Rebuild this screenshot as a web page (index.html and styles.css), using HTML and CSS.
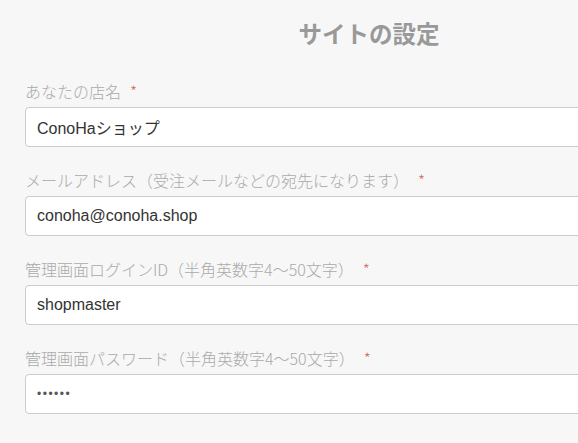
FILE: index.html
```html
<!DOCTYPE html>
<html lang="ja">
    <head>
        <meta charset="utf-8">
        <meta name="viewport" content="width=device-width, initial-scale=1">
        <title>サイトの設定</title>
        <link rel="stylesheet" href="styles.css">
    </head>
    <body>
        <form class="settings">
            <h1 class="settings-title">サイトの設定</h1>
            <div class="field">
                <label for="shop-name">あなたの店名<span class="req">*</span></label>
                <input id="shop-name" type="text" value="ConoHaショップ">
            </div>
            <div class="field">
                <label for="mail">メールアドレス（受注メールなどの宛先になります）<span class="req">*</span></label>
                <input id="mail" type="text" value="conoha@conoha.shop">
            </div>
            <div class="field">
                <label for="login-id">管理画面ログインID（半角英数字4〜50文字）<span class="req">*</span></label>
                <input id="login-id" type="text" value="shopmaster">
            </div>
            <div class="field">
                <label for="password">管理画面パスワード（半角英数字4〜50文字）<span class="req">*</span></label>
                <input id="password" class="secret" type="password" value="123456">
            </div>
        </form>
    </body>
</html>
```
FILE: styles.css
```css
html, body {
    margin: 0;
    overflow: hidden;
}
body {
    background: #f7f7f7;
    font-family: "Liberation Sans", "Noto Sans CJK JP", sans-serif;
}
.settings {
    width: 688px;
    padding: 20px 25px 0;
}
.settings-title {
    margin: 0 0 31px;
    font-size: 23.5px;
    line-height: 30px;
    font-weight: bold;
    color: #999;
    text-align: center;
}
.field {
    margin-bottom: 23px;
}
.field label {
    display: block;
    font-size: 16px;
    line-height: 20px;
    color: #aaa;
    margin-bottom: 6px;
    font-family: "Noto Sans CJK JP", sans-serif;
    font-weight: 300;
}
.req {
    color: #d46a6a;
    margin-left: 9px;
}
.field input {
    display: block;
    box-sizing: border-box;
    width: 100%;
    height: 40px;
    margin: 0;
    padding: 0 11px;
    border: 1px solid #ccc;
    border-radius: 4px;
    background: #fff;
    font-family: "Liberation Sans", "Noto Sans CJK JP", sans-serif;
    font-size: 16px;
    color: #333;
}
.field input.secret {
    font-size: 12px;
    letter-spacing: 1.5px;
    color: #555;
}
```
